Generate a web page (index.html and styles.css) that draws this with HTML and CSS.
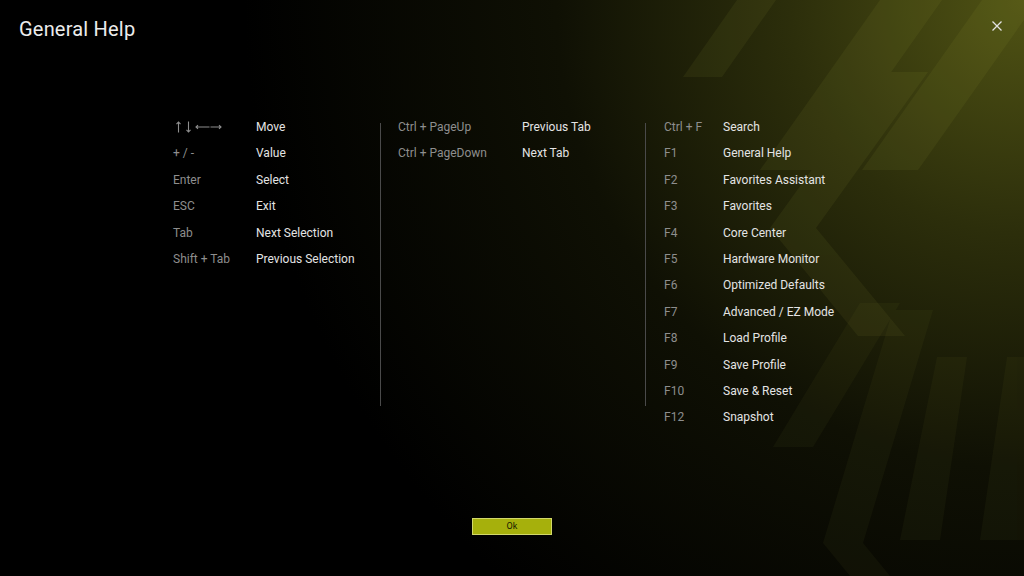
FILE: index.html
```html
<html>
  <head>
    <link rel="stylesheet" href="styles.css">
    <title>General Help</title>
  </head>
  <body>
    <svg class="backdrop" viewBox="0 0 1024 576" preserveAspectRatio="none">
      <defs>
        <radialGradient id="glow" cx="1024" cy="0" r="780" gradientUnits="userSpaceOnUse">
          <stop offset="0" stop-color="#505314"/>
          <stop offset="0.3" stop-color="#2c2e0b"/>
          <stop offset="0.6" stop-color="#0f1004"/>
          <stop offset="1" stop-color="#000000"/>
        </radialGradient>
      </defs>
      <rect width="1024" height="576" fill="url(#glow)"/>
      <g fill="#b4bb44" opacity="0.07">
        <polygon points="683,77 722,77 776,0 737,0"/>
        <polygon points="760,170 822,170 942,0 880,0"/>
        <polygon points="862,170 918,170 1024,20 1024,0 982,0"/>
        <polygon points="770,228 882,72 928,72 816,228 905,336 858,336"/>
      </g>
      <g fill="#b4bb44" opacity="0.045">
        <polygon points="773,447 813,447 900,303 860,303"/>
        <polygon points="823,543 893,310 933,310 863,543 890,576 850,576"/>
        <polygon points="900,540 940,540 967,357 937,357"/>
        <polygon points="980,540 1024,540 1024,357 1007,357"/>
      </g>
    </svg>

    <div class="header">
      <div class="title">General Help</div>
      <svg class="close" viewBox="0 0 10 10">
        <path d="M0.5 0.5 L9.5 9.5 M9.5 0.5 L0.5 9.5" stroke="#e2e2e2" stroke-width="1.3" fill="none"/>
      </svg>
    </div>

    <div class="keys">
      <div class="group group-nav">
        <span class="key"><svg class="arrows" viewBox="0 0 50 12">
            <g stroke="#8e8e8e" stroke-width="1.1" fill="none">
              <path d="M5.5 1 V11.5 M3.5 3.2 L5.5 1 L7.5 3.2"/>
              <path d="M15.5 0.5 V11 M13.5 8.8 L15.5 11 L17.5 8.8"/>
              <path d="M23 6 H36.5 M25 4.2 L23 6 L25 7.8"/>
              <path d="M37.5 6 H48 M46 4.2 L48 6 L46 7.8"/>
            </g>
          </svg></span><span class="desc">Move</span>
        <span class="key">+ / -</span><span class="desc">Value</span>
        <span class="key">Enter</span><span class="desc">Select</span>
        <span class="key">ESC</span><span class="desc">Exit</span>
        <span class="key">Tab</span><span class="desc">Next Selection</span>
        <span class="key">Shift + Tab</span><span class="desc">Previous Selection</span>
      </div>
      <div class="divider"></div>
      <div class="group group-tabs">
        <span class="key">Ctrl + PageUp</span><span class="desc">Previous Tab</span>
        <span class="key">Ctrl + PageDown</span><span class="desc">Next Tab</span>
      </div>
      <div class="divider"></div>
      <div class="group group-fn">
        <span class="key">Ctrl + F</span><span class="desc">Search</span>
        <span class="key">F1</span><span class="desc">General Help</span>
        <span class="key">F2</span><span class="desc">Favorites Assistant</span>
        <span class="key">F3</span><span class="desc">Favorites</span>
        <span class="key">F4</span><span class="desc">Core Center</span>
        <span class="key">F5</span><span class="desc">Hardware Monitor</span>
        <span class="key">F6</span><span class="desc">Optimized Defaults</span>
        <span class="key">F7</span><span class="desc">Advanced / EZ Mode</span>
        <span class="key">F8</span><span class="desc">Load Profile</span>
        <span class="key">F9</span><span class="desc">Save Profile</span>
        <span class="key">F10</span><span class="desc">Save &amp; Reset</span>
        <span class="key">F12</span><span class="desc">Snapshot</span>
      </div>
    </div>

    <div class="footer">
      <div class="btn-ok">Ok</div>
    </div>
  </body>
</html>
```

FILE: styles.css
```css
html, body{
  margin: 0;
  padding: 0;
}
body{
  width: 1024px;
  height: 576px;
  overflow: hidden;
  position: relative;
  display: flex;
  flex-direction: column;
  background: #000;
  color: #e6e6e6;
  font-family: Roboto, "Liberation Sans", sans-serif;
}
.backdrop{
  position: absolute;
  left: 0;
  top: 0;
  width: 1024px;
  height: 576px;
  z-index: 0;
}
.header, .keys, .footer{
  position: relative;
  z-index: 1;
}
.header{
  display: flex;
  justify-content: space-between;
  padding: 17px 22px 0 19px;
}
.title{
  font-size: 20px;
  line-height: 24px;
  color: #ececec;
  letter-spacing: 0.2px;
}
.close{
  width: 10px;
  height: 10px;
  margin-top: 4px;
}
.keys{
  display: flex;
  margin-top: 73px;
  padding-left: 173px;
  font-size: 12px;
  line-height: 26.4px;
}
.group{
  display: grid;
  align-content: start;
}
.group-nav{
  grid-template-columns: 83px auto;
  width: 207px;
}
.group-tabs{
  grid-template-columns: 124px auto;
  width: 247px;
}
.group-fn{
  grid-template-columns: 59px auto;
}
.key{
  color: #8e8e8e;
}
.arrows{
  display: block;
  width: 50px;
  height: 12px;
  margin-top: 7px;
}
.desc{
  color: #e4e4e4;
}
.divider{
  width: 1px;
  height: 283px;
  margin: 9px 17px 0 0;
  background: #4a4a4a;
}
.group-tabs + .divider{
  margin-right: 18px;
}
.footer{
  margin-top: auto;
  padding-bottom: 41px;
  display: flex;
  justify-content: center;
}
.btn-ok{
  width: 78px;
  height: 15px;
  border: 1px solid #d2d86a;
  background: #a6b00c;
  color: #1a1c02;
  font-size: 9px;
  line-height: 15px;
  text-align: center;
}
```
